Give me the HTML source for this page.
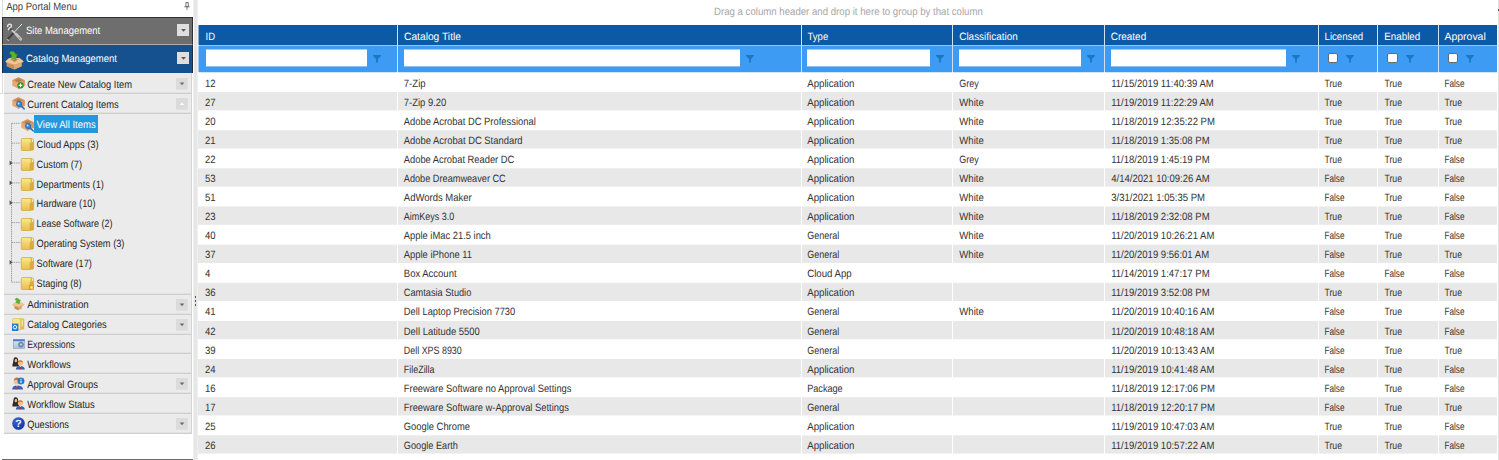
<!DOCTYPE html><html lang="en"><head><meta charset="utf-8"><title>App Portal - Current Catalog Items</title><style>
*{box-sizing:border-box;margin:0;padding:0}
html,body{width:1499px;height:460px;overflow:hidden;background:#fff}
body{position:relative;font-family:"Liberation Sans",sans-serif;font-size:10.6px;color:#3a3a3a;text-rendering:geometricPrecision}
.a{position:absolute;white-space:nowrap}
.t{position:absolute;white-space:nowrap;line-height:12px;height:12px;transform-origin:0 50%}
.hd{color:#fff;font-size:10.6px;transform-origin:0 50%}
.rt{color:#333;font-size:10px;transform-origin:0 50%}
.sm{color:#262626;font-size:10px;transform-origin:0 50%}
.bar{color:#fff;font-size:10px;transform-origin:0 50%}
svg{position:absolute;overflow:visible}
</style></head><body>
<aside id="app-portal-menu" aria-label="App Portal Menu">
<div class="a" style="left:2px;top:0;width:1px;height:94px;background:#dcdcdc"></div>
<div class="a" style="left:0;top:93px;width:3px;height:1px;background:#dcdcdc"></div>
<div class="t " style="left:6px;top:1px;font-size:10.6px;transform:translateX(0.25px) scaleX(0.8959);color:#404040">App Portal Menu</div>
<svg style="left:184px;top:2.4px" width="6" height="8" viewBox="0 0 6 8"><path d="M1.9 0.5h2.4v4h-2.4zM0.4 4.8h5.2M3 5v2.8" fill="none" stroke="#666" stroke-width="0.9"/></svg>
<div class="a" style="left:2px;top:17px;width:191px;height:28px;background:#6e6e6e;border:1px solid #303030;border-bottom:1px solid #b0aeac"></div>
<svg style="left:5.5px;top:23px" width="17" height="18" viewBox="0 0 17 18"><path d="M15.8 1.2L8.4 9" stroke="#e2e2e2" stroke-width="1" stroke-linecap="round"/><path d="M7.6 9.8L2.2 15.6" stroke="#3c3c3c" stroke-width="1.9" stroke-linecap="round"/><path d="M1.2 16.6L2.6 17.3" stroke="#d8d8d8" stroke-width="0.9" stroke-linecap="round"/><path d="M1.6 3.4C1.8 1.4 3.4 0.8 4.6 1.4C5.8 2 5.6 3.4 4.8 4.2C4.2 4.8 3.2 5.2 2.4 6.6" fill="none" stroke="#e4e4e4" stroke-width="1.5" stroke-linecap="round"/><circle cx="5" cy="6.4" r="1.2" fill="#484848"/><path d="M6.2 7.6L9.6 10.8" stroke="#cdcdcd" stroke-width="1.7" stroke-linecap="round"/><path d="M10.2 11.2L14.8 16.2" stroke="#c6c6c6" stroke-width="2.8" stroke-linecap="round"/><path d="M12.8 14.4L14.4 16" stroke="#909090" stroke-width="1" stroke-linecap="round"/></svg>
<div class="t bar" style="left:26px;top:25px;font-size:10.6px;transform:translateX(0.00px) scaleX(0.8941)">Site Management</div>
<div class="a" style="left:177px;top:24px;width:12px;height:12px;background:#dfdfdf"></div>
<svg style="left:180.6px;top:28.6px" width="5" height="3" viewBox="0 0 5 3"><path d="M0 0h5L2.5 2.8z" fill="#5a5a5a"/></svg>
<div class="a" style="left:2px;top:45px;width:191px;height:28px;background:#16518f;border-left:1px solid #1c2c40;border-right:1px solid #1c2c40"></div>
<svg style="left:5px;top:50.5px" width="19" height="18.5" viewBox="0 0 19 18.5"><path d="M0.3 10.4L4 7.2H14.8L18.7 10.4L16.6 12.2V15.2L9.3 18.4L1.8 15.2V12.2z" fill="#d9a66e"/><path d="M4 7.2H14.8L18.7 10.4L9.3 13.6L0.3 10.4z" fill="#efc797"/><path d="M1.8 12L9.3 14.6V18.4L1.8 15.2z" fill="#c8905a"/><path d="M9.3 14.6L16.6 12V15.2L9.3 18.4z" fill="#ddaa73"/><path d="M5.2 8.2H13.6L9.4 11z" fill="#b98250"/><path d="M5.4 0.6C7.5 -0.2 9.8 0.8 10.7 3.4L12.3 2.9L10.6 8.6L5.2 6.4L6.9 5.4C6.6 4.2 6 3.2 4.6 2.6z" fill="#58b52c" stroke="#3e8f1c" stroke-width="0.5"/></svg>
<div class="t bar" style="left:26px;top:53px;font-size:10.6px;transform:translateX(0.00px) scaleX(0.8970)">Catalog Management</div>
<div class="a" style="left:177px;top:52px;width:12px;height:12px;background:#dfdfdf"></div>
<svg style="left:180.6px;top:56.6px" width="5" height="3" viewBox="0 0 5 3"><path d="M0 0h5L2.5 2.8z" fill="#5a5a5a"/></svg>
<div class="a" style="left:4px;top:73px;width:187px;height:360px;background:#ebebeb"></div>
<div class="a" style="left:191px;top:73px;width:1px;height:361px;background:#d4d4d4"></div>
<div class="a" style="left:4px;top:92px;width:187px;height:1px;background:#e2e2e2"></div>
<div class="a" style="left:4px;top:93px;width:187px;height:1px;background:#cecece"></div>
<div class="a" style="left:4px;top:112px;width:187px;height:1px;background:#e2e2e2"></div>
<div class="a" style="left:4px;top:113px;width:187px;height:1px;background:#cecece"></div>
<div class="a" style="left:4px;top:293px;width:187px;height:1px;background:#e2e2e2"></div>
<div class="a" style="left:4px;top:294px;width:187px;height:1px;background:#cecece"></div>
<div class="a" style="left:4px;top:313px;width:187px;height:1px;background:#e2e2e2"></div>
<div class="a" style="left:4px;top:314px;width:187px;height:1px;background:#cecece"></div>
<div class="a" style="left:4px;top:333px;width:187px;height:1px;background:#e2e2e2"></div>
<div class="a" style="left:4px;top:334px;width:187px;height:1px;background:#cecece"></div>
<div class="a" style="left:4px;top:352px;width:187px;height:1px;background:#e2e2e2"></div>
<div class="a" style="left:4px;top:353px;width:187px;height:1px;background:#cecece"></div>
<div class="a" style="left:4px;top:372px;width:187px;height:1px;background:#e2e2e2"></div>
<div class="a" style="left:4px;top:373px;width:187px;height:1px;background:#cecece"></div>
<div class="a" style="left:4px;top:392px;width:187px;height:1px;background:#e2e2e2"></div>
<div class="a" style="left:4px;top:393px;width:187px;height:1px;background:#cecece"></div>
<div class="a" style="left:4px;top:412px;width:187px;height:1px;background:#e2e2e2"></div>
<div class="a" style="left:4px;top:413px;width:187px;height:1px;background:#cecece"></div>
<div class="a" style="left:4px;top:432px;width:187px;height:1px;background:#e2e2e2"></div>
<div class="a" style="left:4px;top:433px;width:187px;height:1px;background:#cecece"></div>
<svg style="left:0;top:0" width="0" height="0"><defs><linearGradient id="fg" x1="0" y1="0" x2="0" y2="1"><stop offset="0" stop-color="#f9e98a"/><stop offset="1" stop-color="#e9bd4e"/></linearGradient><linearGradient id="eg" x1="0" y1="0" x2="0" y2="1"><stop offset="0" stop-color="#e6eef6"/><stop offset="1" stop-color="#a9c0d8"/></linearGradient><radialGradient id="qg" cx="0.35" cy="0.3" r="0.8"><stop offset="0" stop-color="#3a68d0"/><stop offset="1" stop-color="#12309a"/></radialGradient></defs></svg>
<svg style="left:12px;top:77px" width="13" height="12" viewBox="0 0 13 12"><path d="M6.5 0.3L12.7 3.2V8.8L6.5 11.8L0.3 8.8V3.2z" fill="#e4a96f"/><path d="M6.5 0.3L12.7 3.2L6.5 6.1L0.3 3.2z" fill="#cd9460"/><path d="M6.5 6.1L12.7 3.2V8.8L6.5 11.8z" fill="#d3965c"/><path d="M6.5 2L10 3.4L6.5 5L3 3.4z" fill="#b57c48"/><path d="M6.5 6.1V11.8" stroke="#b8834e" stroke-width="0.5"/><circle cx="8.5" cy="8.4" r="2.9" fill="#2a9a2a" stroke="#1d7a1d" stroke-width="0.4"/><path d="M8.5 6.6V10.2M6.7 8.4H10.3" stroke="#fff" stroke-width="1.1"/></svg>
<div class="t sm" style="left:27px;top:79px;font-size:10.6px;transform:translateX(0.20px) scaleX(0.8808)">Create New Catalog Item</div>
<svg style="left:176.2px;top:77.8px" width="11.8" height="11.6" viewBox="0 0 11.8 11.6"><rect x="0" y="0" width="11.8" height="11.6" fill="#dbdbdb"/><path d="M3.7 4.6h4.6L6 7.2z" fill="#6a6a6a"/></svg>
<svg style="left:12px;top:97px" width="13" height="12" viewBox="0 0 13 12"><path d="M6.5 0.3L12.7 3.2V8.8L6.5 11.8L0.3 8.8V3.2z" fill="#e4a96f"/><path d="M6.5 0.3L12.7 3.2L6.5 6.1L0.3 3.2z" fill="#cd9460"/><path d="M6.5 6.1L12.7 3.2V8.8L6.5 11.8z" fill="#d3965c"/><path d="M6.5 2L10 3.4L6.5 5L3 3.4z" fill="#b57c48"/><path d="M6.5 6.1V11.8" stroke="#b8834e" stroke-width="0.5"/><path d="M8.2 8.2L12.2 11.8" stroke="#3c6fb8" stroke-width="1.6" stroke-linecap="round"/><circle cx="7.1" cy="7" r="2.6" fill="#2a8cf0" stroke="#2a62b0" stroke-width="0.8"/><circle cx="6.6" cy="6.5" r="0.9" fill="#bfe4ff"/></svg>
<div class="t sm" style="left:27px;top:99px;font-size:10.6px;transform:translateX(0.20px) scaleX(0.8831)">Current Catalog Items</div>
<svg style="left:176.2px;top:97.7px" width="11.8" height="11.6" viewBox="0 0 11.8 11.6"><rect x="0" y="0" width="11.8" height="11.6" fill="#dbdbdb"/><path d="M3.7 7.1h4.6L6 4.5z" fill="#fff"/></svg>
<svg style="left:12px;top:298px" width="12.5" height="12.5" viewBox="0 0 12.5 12.5"><path d="M0.2 6.8L2.8 4.8H9.8L12.4 6.8L9.8 8.4V10.4L6.3 12.3L2.6 10.4V8.4z" fill="#d9a66e"/><path d="M2.8 4.8H9.8L12.4 6.8L6.3 8.8L0.2 6.8z" fill="#efc797"/><path d="M2.6 8.2L6.3 9.6V12.3L2.6 10.4z" fill="#c8905a"/><path d="M3.8 0.4C5.2 -0.1 6.7 0.6 7.3 2.2L8.4 1.9L7.2 5.8L3.6 4.3L4.8 3.6C4.6 2.8 4.2 2.2 3.2 1.8z" fill="#58b52c" stroke="#3e8f1c" stroke-width="0.4"/></svg>
<div class="t sm" style="left:27px;top:299px;font-size:10.6px;transform:translateX(0.20px) scaleX(0.9166)">Administration</div>
<svg style="left:176.2px;top:298.6px" width="11.8" height="11.6" viewBox="0 0 11.8 11.6"><rect x="0" y="0" width="11.8" height="11.6" fill="#dbdbdb"/><path d="M3.7 4.6h4.6L6 7.2z" fill="#6a6a6a"/></svg>
<svg style="left:12px;top:317.8px" width="12.5" height="13" viewBox="0 0 12.5 13"><path d="M1.5 0.6H11.4Q12.3 0.6 12.3 1.5V10.6Q12.3 11.5 11.4 11.5H6V0.6z" fill="#e6b848"/><path d="M1.4 0.5H8.6V11.6H1.4Q0.5 11.6 0.5 10.7V1.4Q0.5 0.5 1.4 0.5z" fill="#f7e58a" stroke="#e0bb52" stroke-width="0.6"/><path d="M9.6 1.5H11V7L9.6 9.5z" fill="#f6e7a8"/><rect x="0" y="5.6" width="6.4" height="7.4" fill="#1f7fd0"/><circle cx="3" cy="9.2" r="1.7" fill="none" stroke="#fff" stroke-width="1"/></svg>
<div class="t sm" style="left:27px;top:319px;font-size:10.6px;transform:translateX(0.20px) scaleX(0.8767)">Catalog Categories</div>
<svg style="left:176.2px;top:318.5px" width="11.8" height="11.6" viewBox="0 0 11.8 11.6"><rect x="0" y="0" width="11.8" height="11.6" fill="#dbdbdb"/><path d="M3.7 4.6h4.6L6 7.2z" fill="#6a6a6a"/></svg>
<svg style="left:12.8px;top:339.3px" width="12" height="9.6" viewBox="0 0 12 9.6"><rect x="0.3" y="0.3" width="11.4" height="9" fill="url(#eg)" stroke="#7f9dc0" stroke-width="0.6"/><rect x="0.3" y="0.3" width="11.4" height="2" fill="#4d7fd0"/><circle cx="8" cy="5.6" r="2.6" fill="#7d93b5" stroke="#5d7396" stroke-width="0.6"/><circle cx="8" cy="5.6" r="1" fill="#c6d4e6"/></svg>
<div class="t sm" style="left:27px;top:339px;font-size:10.6px;transform:translateX(0.20px) scaleX(0.8282)">Expressions</div>
<svg style="left:12px;top:357.2px" width="13" height="12.6" viewBox="0 0 13 12.6"><path d="M3.4 0.2C5.4 0.2 6.4 1.8 6.2 4C6.1 5.6 7 6.6 7.6 7.4L6.6 9.4H0.4C0.2 7.6 1 6.6 1.2 5C1.4 2.6 1.6 0.2 3.4 0.2z" fill="#2e2a28"/><ellipse cx="3.9" cy="3.6" rx="1.3" ry="1.8" fill="#eab98a"/><path d="M3.8 12.6C3.8 10.2 5.6 9 8.4 9C11.2 9 12.8 10.2 12.8 12.6z" fill="#3860b8"/><path d="M7.6 9.2H9.2L8.4 10.2z" fill="#fff"/><path d="M8.1 10L8.7 10L8.9 12.4H7.9z" fill="#c03030"/><circle cx="8.4" cy="6.2" r="2.5" fill="#f0c090"/><path d="M5.9 5.8C5.8 3.8 7.2 3.2 8.6 3.3C10 3.4 11 4.4 10.9 5.8C10 4.8 8.8 4.6 7.4 4.8C6.6 4.9 6.2 5.2 5.9 5.8z" fill="#c8702a"/></svg>
<div class="t sm" style="left:27px;top:359px;font-size:10.6px;transform:translateX(0.20px) scaleX(0.8941)">Workflows</div>
<svg style="left:12px;top:377.3px" width="12.5" height="12.6" viewBox="0 0 12.5 12.6"><path d="M0.2 12.4C0.2 9.6 2 8.4 5 8.4C8 8.4 11 9.4 11 12.4z" fill="#3860b8"/><path d="M3.8 8.6H5.8L4.8 9.8z" fill="#fff"/><path d="M4.5 9.6L5.1 9.6L5.4 12.2H4.2z" fill="#c03030"/><circle cx="4.6" cy="4.6" r="2.9" fill="#f0c090"/><path d="M1.8 4.2C1.6 1.6 3.2 0.4 5 0.5C6.8 0.6 7.8 2 7.6 3.6C6.4 2.8 5.2 2.6 3.6 2.8C2.6 3 2.2 3.4 1.8 4.2z" fill="#c8702a"/><circle cx="9" cy="4" r="3.2" fill="#1f7fd6" stroke="#1860b0" stroke-width="0.5"/><rect x="8.5" y="3.4" width="1" height="2.8" fill="#fff"/><rect x="8.5" y="1.8" width="1" height="1" fill="#fff"/></svg>
<div class="t sm" style="left:27px;top:379px;font-size:10.6px;transform:translateX(0.20px) scaleX(0.8900)">Approval Groups</div>
<svg style="left:176.2px;top:377.9px" width="11.8" height="11.6" viewBox="0 0 11.8 11.6"><rect x="0" y="0" width="11.8" height="11.6" fill="#dbdbdb"/><path d="M3.7 4.6h4.6L6 7.2z" fill="#6a6a6a"/></svg>
<svg style="left:12px;top:397px" width="13" height="12.6" viewBox="0 0 13 12.6"><path d="M3.4 0.2C5.4 0.2 6.4 1.8 6.2 4C6.1 5.6 7 6.6 7.6 7.4L6.6 9.4H0.4C0.2 7.6 1 6.6 1.2 5C1.4 2.6 1.6 0.2 3.4 0.2z" fill="#2e2a28"/><ellipse cx="3.9" cy="3.6" rx="1.3" ry="1.8" fill="#eab98a"/><path d="M3.8 12.6C3.8 10.2 5.6 9 8.4 9C11.2 9 12.8 10.2 12.8 12.6z" fill="#3860b8"/><path d="M7.6 9.2H9.2L8.4 10.2z" fill="#fff"/><path d="M8.1 10L8.7 10L8.9 12.4H7.9z" fill="#c03030"/><circle cx="8.4" cy="6.2" r="2.5" fill="#f0c090"/><path d="M5.9 5.8C5.8 3.8 7.2 3.2 8.6 3.3C10 3.4 11 4.4 10.9 5.8C10 4.8 8.8 4.6 7.4 4.8C6.6 4.9 6.2 5.2 5.9 5.8z" fill="#c8702a"/></svg>
<div class="t sm" style="left:27px;top:399px;font-size:10.6px;transform:translateX(0.20px) scaleX(0.8851)">Workflow Status</div>
<svg style="left:12px;top:417px" width="13" height="13" viewBox="0 0 13 13"><circle cx="6.5" cy="6.5" r="6.3" fill="url(#qg)"/><text x="6.5" y="10.2" text-anchor="middle" font-family="Liberation Sans, sans-serif" font-weight="bold" font-size="10.5" fill="#f4f4f8">?</text></svg>
<div class="t sm" style="left:27px;top:419px;font-size:10.6px;transform:translateX(0.20px) scaleX(0.8753)">Questions</div>
<svg style="left:176.2px;top:417.6px" width="11.8" height="11.6" viewBox="0 0 11.8 11.6"><rect x="0" y="0" width="11.8" height="11.6" fill="#dbdbdb"/><path d="M3.7 4.6h4.6L6 7.2z" fill="#6a6a6a"/></svg>
<svg style="left:0;top:0" width="40" height="300" viewBox="0 0 40 300"><path d="M11.5 123.3V282.18" stroke="#9c9c9c" stroke-width="1" stroke-dasharray="1.4 0.8" fill="none"/><path d="M11.5 123.30H20.5" stroke="#9c9c9c" stroke-width="1" stroke-dasharray="1.4 0.8" fill="none"/><path d="M11.5 143.16H20.5" stroke="#9c9c9c" stroke-width="1" stroke-dasharray="1.4 0.8" fill="none"/><path d="M11.5 163.02H20.5" stroke="#9c9c9c" stroke-width="1" stroke-dasharray="1.4 0.8" fill="none"/><path d="M9.6 160.62L12.5 163.02L9.6 165.42z" fill="#505050"/><path d="M11.5 182.88H20.5" stroke="#9c9c9c" stroke-width="1" stroke-dasharray="1.4 0.8" fill="none"/><path d="M9.6 180.48L12.5 182.88L9.6 185.28z" fill="#505050"/><path d="M11.5 202.74H20.5" stroke="#9c9c9c" stroke-width="1" stroke-dasharray="1.4 0.8" fill="none"/><path d="M9.6 200.34L12.5 202.74L9.6 205.14z" fill="#505050"/><path d="M11.5 222.60H20.5" stroke="#9c9c9c" stroke-width="1" stroke-dasharray="1.4 0.8" fill="none"/><path d="M11.5 242.46H20.5" stroke="#9c9c9c" stroke-width="1" stroke-dasharray="1.4 0.8" fill="none"/><path d="M11.5 262.32H20.5" stroke="#9c9c9c" stroke-width="1" stroke-dasharray="1.4 0.8" fill="none"/><path d="M9.6 259.92L12.5 262.32L9.6 264.72z" fill="#505050"/><path d="M11.5 282.18H20.5" stroke="#9c9c9c" stroke-width="1" stroke-dasharray="1.4 0.8" fill="none"/></svg>
<div class="a" style="left:34px;top:115px;width:64px;height:18px;background:#2398dc"></div>
<div class="t sm" style="left:36px;top:119px;font-size:10.6px;transform:translateX(0.60px) scaleX(0.8993);color:#fff">View All Items</div>
<svg style="left:20.8px;top:118.6px" width="13" height="12" viewBox="0 0 13 12"><path d="M6.5 0.3L12.7 3.2V8.8L6.5 11.8L0.3 8.8V3.2z" fill="#e4a96f"/><path d="M6.5 0.3L12.7 3.2L6.5 6.1L0.3 3.2z" fill="#cd9460"/><path d="M6.5 6.1L12.7 3.2V8.8L6.5 11.8z" fill="#d3965c"/><path d="M6.5 2L10 3.4L6.5 5L3 3.4z" fill="#b57c48"/><path d="M6.5 6.1V11.8" stroke="#b8834e" stroke-width="0.5"/><path d="M8.2 8.2L12.2 11.8" stroke="#3c6fb8" stroke-width="1.6" stroke-linecap="round"/><circle cx="7.1" cy="7" r="2.6" fill="#2a8cf0" stroke="#2a62b0" stroke-width="0.8"/><circle cx="6.6" cy="6.5" r="0.9" fill="#bfe4ff"/></svg>
<div class="t sm" style="left:36px;top:139px;font-size:10.6px;transform:translateX(0.60px) scaleX(0.8864)">Cloud Apps (3)</div>
<svg style="left:20.5px;top:138.06px" width="13" height="13" viewBox="0 0 13 13"><path d="M8.5 0.8H11.2Q12.6 0.8 12.6 2.2V11Q12.6 12.2 11.4 12.2H8.5z" fill="#e0a93c" stroke="#c9992f" stroke-width="0.5"/><path d="M10.6 1.2H12.2V3.6L10.6 4.6z" fill="#f6ecc0"/><path d="M1.2 0.5H10.2V4.4L9.2 5.4V12.5H1.2Q0.3 12.5 0.3 11.6V1.4Q0.3 0.5 1.2 0.5z" fill="url(#fg)" stroke="#cfa43a" stroke-width="0.7"/></svg>
<div class="t sm" style="left:36px;top:159px;font-size:10.6px;transform:translateX(0.60px) scaleX(0.8661)">Custom (7)</div>
<svg style="left:20.5px;top:157.92px" width="13" height="13" viewBox="0 0 13 13"><path d="M8.5 0.8H11.2Q12.6 0.8 12.6 2.2V11Q12.6 12.2 11.4 12.2H8.5z" fill="#e0a93c" stroke="#c9992f" stroke-width="0.5"/><path d="M10.6 1.2H12.2V3.6L10.6 4.6z" fill="#f6ecc0"/><path d="M1.2 0.5H10.2V4.4L9.2 5.4V12.5H1.2Q0.3 12.5 0.3 11.6V1.4Q0.3 0.5 1.2 0.5z" fill="url(#fg)" stroke="#cfa43a" stroke-width="0.7"/></svg>
<div class="t sm" style="left:36px;top:179px;font-size:10.6px;transform:translateX(0.60px) scaleX(0.8801)">Departments (1)</div>
<svg style="left:20.5px;top:177.78px" width="13" height="13" viewBox="0 0 13 13"><path d="M8.5 0.8H11.2Q12.6 0.8 12.6 2.2V11Q12.6 12.2 11.4 12.2H8.5z" fill="#e0a93c" stroke="#c9992f" stroke-width="0.5"/><path d="M10.6 1.2H12.2V3.6L10.6 4.6z" fill="#f6ecc0"/><path d="M1.2 0.5H10.2V4.4L9.2 5.4V12.5H1.2Q0.3 12.5 0.3 11.6V1.4Q0.3 0.5 1.2 0.5z" fill="url(#fg)" stroke="#cfa43a" stroke-width="0.7"/></svg>
<div class="t sm" style="left:36px;top:198px;font-size:10.6px;transform:translateX(0.60px) scaleX(0.8696)">Hardware (10)</div>
<svg style="left:20.5px;top:197.64px" width="13" height="13" viewBox="0 0 13 13"><path d="M8.5 0.8H11.2Q12.6 0.8 12.6 2.2V11Q12.6 12.2 11.4 12.2H8.5z" fill="#e0a93c" stroke="#c9992f" stroke-width="0.5"/><path d="M10.6 1.2H12.2V3.6L10.6 4.6z" fill="#f6ecc0"/><path d="M1.2 0.5H10.2V4.4L9.2 5.4V12.5H1.2Q0.3 12.5 0.3 11.6V1.4Q0.3 0.5 1.2 0.5z" fill="url(#fg)" stroke="#cfa43a" stroke-width="0.7"/></svg>
<div class="t sm" style="left:36px;top:218px;font-size:10.6px;transform:translateX(0.60px) scaleX(0.8474)">Lease Software (2)</div>
<svg style="left:20.5px;top:217.5px" width="13" height="13" viewBox="0 0 13 13"><path d="M8.5 0.8H11.2Q12.6 0.8 12.6 2.2V11Q12.6 12.2 11.4 12.2H8.5z" fill="#e0a93c" stroke="#c9992f" stroke-width="0.5"/><path d="M10.6 1.2H12.2V3.6L10.6 4.6z" fill="#f6ecc0"/><path d="M1.2 0.5H10.2V4.4L9.2 5.4V12.5H1.2Q0.3 12.5 0.3 11.6V1.4Q0.3 0.5 1.2 0.5z" fill="url(#fg)" stroke="#cfa43a" stroke-width="0.7"/></svg>
<div class="t sm" style="left:36px;top:238px;font-size:10.6px;transform:translateX(0.60px) scaleX(0.8724)">Operating System (3)</div>
<svg style="left:20.5px;top:237.36px" width="13" height="13" viewBox="0 0 13 13"><path d="M8.5 0.8H11.2Q12.6 0.8 12.6 2.2V11Q12.6 12.2 11.4 12.2H8.5z" fill="#e0a93c" stroke="#c9992f" stroke-width="0.5"/><path d="M10.6 1.2H12.2V3.6L10.6 4.6z" fill="#f6ecc0"/><path d="M1.2 0.5H10.2V4.4L9.2 5.4V12.5H1.2Q0.3 12.5 0.3 11.6V1.4Q0.3 0.5 1.2 0.5z" fill="url(#fg)" stroke="#cfa43a" stroke-width="0.7"/></svg>
<div class="t sm" style="left:36px;top:258px;font-size:10.6px;transform:translateX(0.60px) scaleX(0.8703)">Software (17)</div>
<svg style="left:20.5px;top:257.22px" width="13" height="13" viewBox="0 0 13 13"><path d="M8.5 0.8H11.2Q12.6 0.8 12.6 2.2V11Q12.6 12.2 11.4 12.2H8.5z" fill="#e0a93c" stroke="#c9992f" stroke-width="0.5"/><path d="M10.6 1.2H12.2V3.6L10.6 4.6z" fill="#f6ecc0"/><path d="M1.2 0.5H10.2V4.4L9.2 5.4V12.5H1.2Q0.3 12.5 0.3 11.6V1.4Q0.3 0.5 1.2 0.5z" fill="url(#fg)" stroke="#cfa43a" stroke-width="0.7"/></svg>
<div class="t sm" style="left:36px;top:278px;font-size:10.6px;transform:translateX(0.60px) scaleX(0.8662)">Staging (8)</div>
<svg style="left:20.5px;top:277.08px" width="13" height="13" viewBox="0 0 13 13"><path d="M8.5 0.8H11.2Q12.6 0.8 12.6 2.2V11Q12.6 12.2 11.4 12.2H8.5z" fill="#e0a93c" stroke="#c9992f" stroke-width="0.5"/><path d="M10.6 1.2H12.2V3.6L10.6 4.6z" fill="#f6ecc0"/><path d="M1.2 0.5H10.2V4.4L9.2 5.4V12.5H1.2Q0.3 12.5 0.3 11.6V1.4Q0.3 0.5 1.2 0.5z" fill="url(#fg)" stroke="#cfa43a" stroke-width="0.7"/><rect x="8.6" y="8.4" width="4" height="4" fill="#f2b01e" stroke="#c98a10" stroke-width="0.5"/><rect x="9.6" y="9.4" width="2" height="2" fill="#fff4c0"/></svg>
<div class="a" style="left:2px;top:459px;width:191px;height:1px;background:#6a6a6a"></div>
<div class="a" style="left:193px;top:0;width:1px;height:17px;background:#f1f1f1"></div>
<div class="a" style="left:193px;top:73px;width:1px;height:386px;background:#f1f1f1"></div>
<div class="a" style="left:194px;top:0;width:3px;height:460px;background:#e6e6e6"></div>
<div class="a" style="left:197px;top:0;width:1px;height:460px;background:#f0f0f0"></div>
<div class="a" style="left:195px;top:296px;width:1px;height:2px;background:#555"></div>
<div class="a" style="left:195px;top:300px;width:1px;height:2px;background:#555"></div>
<div class="a" style="left:195px;top:304px;width:1px;height:2px;background:#555"></div>
</aside>
<main id="catalog-grid" role="grid" aria-label="Current Catalog Items">
<div class="t " style="left:714px;top:6px;font-size:10.6px;transform:translateX(0.00px) scaleX(0.9094);color:#a6a6a6">Drag a column header and drop it here to group by that column</div>
<div class="a" style="left:199px;top:25px;width:1298px;height:21px;background:#0c5aa6"></div>
<div class="a" style="left:199px;top:45px;width:1298px;height:1px;background:#9fc4e8"></div>
<div class="a" style="left:199px;top:46px;width:1298px;height:26px;background:#3d9bf4"></div>
<div class="a" style="left:199px;top:72px;width:1298px;height:1px;background:#cfe6fc"></div>
<div class="a" style="left:198px;top:25px;width:1px;height:20px;background:#85acd2"></div>
<div class="a" style="left:198px;top:46px;width:1px;height:26px;background:#9ecdf9"></div>
<div class="t hd" style="left:205px;top:31px;font-size:10.6px;transform:translateX(0.50px) scaleX(0.8962)">ID</div>
<div class="t hd" style="left:404px;top:31px;font-size:10.6px;transform:translateX(0.00px) scaleX(0.9672)">Catalog Title</div>
<div class="t hd" style="left:807px;top:31px;font-size:10.6px;transform:translateX(0.60px) scaleX(0.8956)">Type</div>
<div class="t hd" style="left:959px;top:31px;font-size:10.6px;transform:translateX(0.25px) scaleX(0.9370)">Classification</div>
<div class="t hd" style="left:1110px;top:31px;font-size:10.6px;transform:translateX(0.75px) scaleX(0.9407)">Created</div>
<div class="t hd" style="left:1324px;top:31px;font-size:10.6px;transform:translateX(0.50px) scaleX(0.9128)">Licensed</div>
<div class="t hd" style="left:1384px;top:31px;font-size:10.6px;transform:translateX(0.25px) scaleX(0.9254)">Enabled</div>
<div class="t hd" style="left:1444px;top:31px;font-size:10.6px;transform:translateX(0.50px) scaleX(0.9864)">Approval</div>
<div class="t rt" style="left:205px;top:78px;font-size:10.6px;transform:translateX(0.00px) scaleX(0.9000)">12</div>
<div class="t rt" style="left:403px;top:78px;font-size:10.6px;transform:translateX(0.80px) scaleX(0.9020)">7-Zip</div>
<div class="t rt" style="left:807px;top:78px;font-size:10.6px;transform:translateX(0.20px) scaleX(0.9125)">Application</div>
<div class="t rt" style="left:959px;top:78px;font-size:10.6px;transform:translateX(0.30px) scaleX(0.8497)">Grey</div>
<div class="t rt" style="left:1111px;top:78px;font-size:10.6px;transform:translateX(0.20px) scaleX(0.9000)">11/15/2019 11:40:39 AM</div>
<div class="t rt" style="left:1324px;top:78px;font-size:10.6px;transform:translateX(0.50px) scaleX(0.8173)">True</div>
<div class="t rt" style="left:1384px;top:78px;font-size:10.6px;transform:translateX(0.50px) scaleX(0.8173)">True</div>
<div class="t rt" style="left:1444px;top:78px;font-size:10.6px;transform:translateX(0.50px) scaleX(0.7717)">False</div>
<div class="a" style="left:198px;top:92px;width:1299px;height:18px;background:#e8e8e8"></div>
<div class="a" style="left:198px;top:110px;width:1299px;height:1px;background:#f6f6f6"></div>
<div class="t rt" style="left:205px;top:97px;font-size:10.6px;transform:translateX(0.00px) scaleX(0.9000)">27</div>
<div class="t rt" style="left:403px;top:97px;font-size:10.6px;transform:translateX(0.80px) scaleX(0.8900)">7-Zip 9.20</div>
<div class="t rt" style="left:807px;top:97px;font-size:10.6px;transform:translateX(0.20px) scaleX(0.9125)">Application</div>
<div class="t rt" style="left:959px;top:97px;font-size:10.6px;transform:translateX(0.30px) scaleX(0.9046)">White</div>
<div class="t rt" style="left:1111px;top:97px;font-size:10.6px;transform:translateX(0.20px) scaleX(0.9000)">11/19/2019 11:22:29 AM</div>
<div class="t rt" style="left:1324px;top:97px;font-size:10.6px;transform:translateX(0.50px) scaleX(0.8173)">True</div>
<div class="t rt" style="left:1384px;top:97px;font-size:10.6px;transform:translateX(0.50px) scaleX(0.8173)">True</div>
<div class="t rt" style="left:1444px;top:97px;font-size:10.6px;transform:translateX(0.50px) scaleX(0.8173)">True</div>
<div class="t rt" style="left:205px;top:116px;font-size:10.6px;transform:translateX(0.00px) scaleX(0.9000)">20</div>
<div class="t rt" style="left:403px;top:116px;font-size:10.6px;transform:translateX(0.80px) scaleX(0.8854)">Adobe Acrobat DC Professional</div>
<div class="t rt" style="left:807px;top:116px;font-size:10.6px;transform:translateX(0.20px) scaleX(0.9125)">Application</div>
<div class="t rt" style="left:959px;top:116px;font-size:10.6px;transform:translateX(0.30px) scaleX(0.9046)">White</div>
<div class="t rt" style="left:1111px;top:116px;font-size:10.6px;transform:translateX(0.20px) scaleX(0.9000)">11/18/2019 12:35:22 PM</div>
<div class="t rt" style="left:1324px;top:116px;font-size:10.6px;transform:translateX(0.50px) scaleX(0.8173)">True</div>
<div class="t rt" style="left:1384px;top:116px;font-size:10.6px;transform:translateX(0.50px) scaleX(0.8173)">True</div>
<div class="t rt" style="left:1444px;top:116px;font-size:10.6px;transform:translateX(0.50px) scaleX(0.8173)">True</div>
<div class="a" style="left:198px;top:131px;width:1299px;height:17px;background:#e8e8e8"></div>
<div class="a" style="left:198px;top:130px;width:1299px;height:1px;background:#ededed"></div>
<div class="a" style="left:198px;top:148px;width:1299px;height:1px;background:#f3f3f3"></div>
<div class="t rt" style="left:205px;top:135px;font-size:10.6px;transform:translateX(0.00px) scaleX(0.9000)">21</div>
<div class="t rt" style="left:403px;top:135px;font-size:10.6px;transform:translateX(0.80px) scaleX(0.8881)">Adobe Acrobat DC Standard</div>
<div class="t rt" style="left:807px;top:135px;font-size:10.6px;transform:translateX(0.20px) scaleX(0.9125)">Application</div>
<div class="t rt" style="left:959px;top:135px;font-size:10.6px;transform:translateX(0.30px) scaleX(0.9046)">White</div>
<div class="t rt" style="left:1111px;top:135px;font-size:10.6px;transform:translateX(0.20px) scaleX(0.9000)">11/18/2019 1:35:08 PM</div>
<div class="t rt" style="left:1324px;top:135px;font-size:10.6px;transform:translateX(0.50px) scaleX(0.8173)">True</div>
<div class="t rt" style="left:1384px;top:135px;font-size:10.6px;transform:translateX(0.50px) scaleX(0.8173)">True</div>
<div class="t rt" style="left:1444px;top:135px;font-size:10.6px;transform:translateX(0.50px) scaleX(0.8173)">True</div>
<div class="t rt" style="left:205px;top:154px;font-size:10.6px;transform:translateX(0.00px) scaleX(0.9000)">22</div>
<div class="t rt" style="left:403px;top:154px;font-size:10.6px;transform:translateX(0.80px) scaleX(0.8805)">Adobe Acrobat Reader DC</div>
<div class="t rt" style="left:807px;top:154px;font-size:10.6px;transform:translateX(0.20px) scaleX(0.9125)">Application</div>
<div class="t rt" style="left:959px;top:154px;font-size:10.6px;transform:translateX(0.30px) scaleX(0.8497)">Grey</div>
<div class="t rt" style="left:1111px;top:154px;font-size:10.6px;transform:translateX(0.20px) scaleX(0.9000)">11/18/2019 1:45:19 PM</div>
<div class="t rt" style="left:1324px;top:154px;font-size:10.6px;transform:translateX(0.50px) scaleX(0.8173)">True</div>
<div class="t rt" style="left:1384px;top:154px;font-size:10.6px;transform:translateX(0.50px) scaleX(0.8173)">True</div>
<div class="t rt" style="left:1444px;top:154px;font-size:10.6px;transform:translateX(0.50px) scaleX(0.7717)">False</div>
<div class="a" style="left:198px;top:169px;width:1299px;height:17px;background:#e8e8e8"></div>
<div class="a" style="left:198px;top:168px;width:1299px;height:1px;background:#f0f0f0"></div>
<div class="a" style="left:198px;top:186px;width:1299px;height:1px;background:#f0f0f0"></div>
<div class="t rt" style="left:205px;top:173px;font-size:10.6px;transform:translateX(0.00px) scaleX(0.9000)">53</div>
<div class="t rt" style="left:403px;top:173px;font-size:10.6px;transform:translateX(0.80px) scaleX(0.8657)">Adobe Dreamweaver CC</div>
<div class="t rt" style="left:807px;top:173px;font-size:10.6px;transform:translateX(0.20px) scaleX(0.9125)">Application</div>
<div class="t rt" style="left:959px;top:173px;font-size:10.6px;transform:translateX(0.30px) scaleX(0.9046)">White</div>
<div class="t rt" style="left:1111px;top:173px;font-size:10.6px;transform:translateX(0.20px) scaleX(0.9000)">4/14/2021 10:09:26 AM</div>
<div class="t rt" style="left:1324px;top:173px;font-size:10.6px;transform:translateX(0.50px) scaleX(0.7717)">False</div>
<div class="t rt" style="left:1384px;top:173px;font-size:10.6px;transform:translateX(0.50px) scaleX(0.8173)">True</div>
<div class="t rt" style="left:1444px;top:173px;font-size:10.6px;transform:translateX(0.50px) scaleX(0.7717)">False</div>
<div class="t rt" style="left:205px;top:192px;font-size:10.6px;transform:translateX(0.00px) scaleX(0.9000)">51</div>
<div class="t rt" style="left:403px;top:192px;font-size:10.6px;transform:translateX(0.80px) scaleX(0.8972)">AdWords Maker</div>
<div class="t rt" style="left:807px;top:192px;font-size:10.6px;transform:translateX(0.20px) scaleX(0.9125)">Application</div>
<div class="t rt" style="left:959px;top:192px;font-size:10.6px;transform:translateX(0.30px) scaleX(0.9046)">White</div>
<div class="t rt" style="left:1111px;top:192px;font-size:10.6px;transform:translateX(0.20px) scaleX(0.9000)">3/31/2021 1:05:35 PM</div>
<div class="t rt" style="left:1324px;top:192px;font-size:10.6px;transform:translateX(0.50px) scaleX(0.7717)">False</div>
<div class="t rt" style="left:1384px;top:192px;font-size:10.6px;transform:translateX(0.50px) scaleX(0.8173)">True</div>
<div class="t rt" style="left:1444px;top:192px;font-size:10.6px;transform:translateX(0.50px) scaleX(0.7717)">False</div>
<div class="a" style="left:198px;top:207px;width:1299px;height:17px;background:#e8e8e8"></div>
<div class="a" style="left:198px;top:206px;width:1299px;height:1px;background:#f3f3f3"></div>
<div class="a" style="left:198px;top:224px;width:1299px;height:1px;background:#ededed"></div>
<div class="t rt" style="left:205px;top:211px;font-size:10.6px;transform:translateX(0.00px) scaleX(0.9000)">23</div>
<div class="t rt" style="left:403px;top:211px;font-size:10.6px;transform:translateX(0.80px) scaleX(0.8485)">AimKeys 3.0</div>
<div class="t rt" style="left:807px;top:211px;font-size:10.6px;transform:translateX(0.20px) scaleX(0.9125)">Application</div>
<div class="t rt" style="left:959px;top:211px;font-size:10.6px;transform:translateX(0.30px) scaleX(0.9046)">White</div>
<div class="t rt" style="left:1111px;top:211px;font-size:10.6px;transform:translateX(0.20px) scaleX(0.9000)">11/18/2019 2:32:08 PM</div>
<div class="t rt" style="left:1324px;top:211px;font-size:10.6px;transform:translateX(0.50px) scaleX(0.8173)">True</div>
<div class="t rt" style="left:1384px;top:211px;font-size:10.6px;transform:translateX(0.50px) scaleX(0.8173)">True</div>
<div class="t rt" style="left:1444px;top:211px;font-size:10.6px;transform:translateX(0.50px) scaleX(0.7717)">False</div>
<div class="t rt" style="left:205px;top:230px;font-size:10.6px;transform:translateX(0.00px) scaleX(0.9000)">40</div>
<div class="t rt" style="left:403px;top:230px;font-size:10.6px;transform:translateX(0.80px) scaleX(0.8840)">Apple iMac 21.5 inch</div>
<div class="t rt" style="left:807px;top:230px;font-size:10.6px;transform:translateX(0.20px) scaleX(0.8506)">General</div>
<div class="t rt" style="left:959px;top:230px;font-size:10.6px;transform:translateX(0.30px) scaleX(0.9046)">White</div>
<div class="t rt" style="left:1111px;top:230px;font-size:10.6px;transform:translateX(0.20px) scaleX(0.9000)">11/20/2019 10:26:21 AM</div>
<div class="t rt" style="left:1324px;top:230px;font-size:10.6px;transform:translateX(0.50px) scaleX(0.7717)">False</div>
<div class="t rt" style="left:1384px;top:230px;font-size:10.6px;transform:translateX(0.50px) scaleX(0.8173)">True</div>
<div class="t rt" style="left:1444px;top:230px;font-size:10.6px;transform:translateX(0.50px) scaleX(0.7717)">False</div>
<div class="a" style="left:198px;top:245px;width:1299px;height:18px;background:#e8e8e8"></div>
<div class="a" style="left:198px;top:244px;width:1299px;height:1px;background:#f6f6f6"></div>
<div class="t rt" style="left:205px;top:249px;font-size:10.6px;transform:translateX(0.00px) scaleX(0.9000)">37</div>
<div class="t rt" style="left:403px;top:249px;font-size:10.6px;transform:translateX(0.80px) scaleX(0.8856)">Apple iPhone 11</div>
<div class="t rt" style="left:807px;top:249px;font-size:10.6px;transform:translateX(0.20px) scaleX(0.8506)">General</div>
<div class="t rt" style="left:959px;top:249px;font-size:10.6px;transform:translateX(0.30px) scaleX(0.9046)">White</div>
<div class="t rt" style="left:1111px;top:249px;font-size:10.6px;transform:translateX(0.20px) scaleX(0.9000)">11/20/2019 9:56:01 AM</div>
<div class="t rt" style="left:1324px;top:249px;font-size:10.6px;transform:translateX(0.50px) scaleX(0.7717)">False</div>
<div class="t rt" style="left:1384px;top:249px;font-size:10.6px;transform:translateX(0.50px) scaleX(0.8173)">True</div>
<div class="t rt" style="left:1444px;top:249px;font-size:10.6px;transform:translateX(0.50px) scaleX(0.8173)">True</div>
<div class="t rt" style="left:205px;top:268px;font-size:10.6px;transform:translateX(0.00px) scaleX(0.9000)">4</div>
<div class="t rt" style="left:403px;top:268px;font-size:10.6px;transform:translateX(0.80px) scaleX(0.8959)">Box Account</div>
<div class="t rt" style="left:807px;top:268px;font-size:10.6px;transform:translateX(0.20px) scaleX(0.9097)">Cloud App</div>
<div class="t rt" style="left:1111px;top:268px;font-size:10.6px;transform:translateX(0.20px) scaleX(0.9000)">11/14/2019 1:47:17 PM</div>
<div class="t rt" style="left:1324px;top:268px;font-size:10.6px;transform:translateX(0.50px) scaleX(0.7717)">False</div>
<div class="t rt" style="left:1384px;top:268px;font-size:10.6px;transform:translateX(0.50px) scaleX(0.7717)">False</div>
<div class="t rt" style="left:1444px;top:268px;font-size:10.6px;transform:translateX(0.50px) scaleX(0.7717)">False</div>
<div class="a" style="left:198px;top:283px;width:1299px;height:18px;background:#e8e8e8"></div>
<div class="a" style="left:198px;top:282px;width:1299px;height:1px;background:#fafafa"></div>
<div class="t rt" style="left:205px;top:287px;font-size:10.6px;transform:translateX(0.00px) scaleX(0.9000)">36</div>
<div class="t rt" style="left:403px;top:287px;font-size:10.6px;transform:translateX(0.80px) scaleX(0.8682)">Camtasia Studio</div>
<div class="t rt" style="left:807px;top:287px;font-size:10.6px;transform:translateX(0.20px) scaleX(0.9125)">Application</div>
<div class="t rt" style="left:1111px;top:287px;font-size:10.6px;transform:translateX(0.20px) scaleX(0.9000)">11/19/2019 3:52:08 PM</div>
<div class="t rt" style="left:1324px;top:287px;font-size:10.6px;transform:translateX(0.50px) scaleX(0.8173)">True</div>
<div class="t rt" style="left:1384px;top:287px;font-size:10.6px;transform:translateX(0.50px) scaleX(0.8173)">True</div>
<div class="t rt" style="left:1444px;top:287px;font-size:10.6px;transform:translateX(0.50px) scaleX(0.8173)">True</div>
<div class="t rt" style="left:205px;top:306px;font-size:10.6px;transform:translateX(0.00px) scaleX(0.9000)">41</div>
<div class="t rt" style="left:403px;top:306px;font-size:10.6px;transform:translateX(0.80px) scaleX(0.8799)">Dell Laptop Precision 7730</div>
<div class="t rt" style="left:807px;top:306px;font-size:10.6px;transform:translateX(0.20px) scaleX(0.8506)">General</div>
<div class="t rt" style="left:959px;top:306px;font-size:10.6px;transform:translateX(0.30px) scaleX(0.9046)">White</div>
<div class="t rt" style="left:1111px;top:306px;font-size:10.6px;transform:translateX(0.20px) scaleX(0.9000)">11/20/2019 10:40:16 AM</div>
<div class="t rt" style="left:1324px;top:306px;font-size:10.6px;transform:translateX(0.50px) scaleX(0.7717)">False</div>
<div class="t rt" style="left:1384px;top:306px;font-size:10.6px;transform:translateX(0.50px) scaleX(0.8173)">True</div>
<div class="t rt" style="left:1444px;top:306px;font-size:10.6px;transform:translateX(0.50px) scaleX(0.7717)">False</div>
<div class="a" style="left:198px;top:321px;width:1299px;height:18px;background:#e8e8e8"></div>
<div class="a" style="left:198px;top:339px;width:1299px;height:1px;background:#fafafa"></div>
<div class="t rt" style="left:205px;top:326px;font-size:10.6px;transform:translateX(0.00px) scaleX(0.9000)">42</div>
<div class="t rt" style="left:403px;top:326px;font-size:10.6px;transform:translateX(0.80px) scaleX(0.8896)">Dell Latitude 5500</div>
<div class="t rt" style="left:807px;top:326px;font-size:10.6px;transform:translateX(0.20px) scaleX(0.8506)">General</div>
<div class="t rt" style="left:1111px;top:326px;font-size:10.6px;transform:translateX(0.20px) scaleX(0.9000)">11/20/2019 10:48:18 AM</div>
<div class="t rt" style="left:1324px;top:326px;font-size:10.6px;transform:translateX(0.50px) scaleX(0.7717)">False</div>
<div class="t rt" style="left:1384px;top:326px;font-size:10.6px;transform:translateX(0.50px) scaleX(0.8173)">True</div>
<div class="t rt" style="left:1444px;top:326px;font-size:10.6px;transform:translateX(0.50px) scaleX(0.7717)">False</div>
<div class="t rt" style="left:205px;top:345px;font-size:10.6px;transform:translateX(0.00px) scaleX(0.9000)">39</div>
<div class="t rt" style="left:403px;top:345px;font-size:10.6px;transform:translateX(0.80px) scaleX(0.8412)">Dell XPS 8930</div>
<div class="t rt" style="left:807px;top:345px;font-size:10.6px;transform:translateX(0.20px) scaleX(0.8506)">General</div>
<div class="t rt" style="left:1111px;top:345px;font-size:10.6px;transform:translateX(0.20px) scaleX(0.9000)">11/20/2019 10:13:43 AM</div>
<div class="t rt" style="left:1324px;top:345px;font-size:10.6px;transform:translateX(0.50px) scaleX(0.7717)">False</div>
<div class="t rt" style="left:1384px;top:345px;font-size:10.6px;transform:translateX(0.50px) scaleX(0.8173)">True</div>
<div class="t rt" style="left:1444px;top:345px;font-size:10.6px;transform:translateX(0.50px) scaleX(0.8173)">True</div>
<div class="a" style="left:198px;top:359px;width:1299px;height:18px;background:#e8e8e8"></div>
<div class="a" style="left:198px;top:377px;width:1299px;height:1px;background:#f7f7f7"></div>
<div class="t rt" style="left:205px;top:364px;font-size:10.6px;transform:translateX(0.00px) scaleX(0.9000)">24</div>
<div class="t rt" style="left:403px;top:364px;font-size:10.6px;transform:translateX(0.80px) scaleX(0.8422)">FileZilla</div>
<div class="t rt" style="left:807px;top:364px;font-size:10.6px;transform:translateX(0.20px) scaleX(0.9125)">Application</div>
<div class="t rt" style="left:1111px;top:364px;font-size:10.6px;transform:translateX(0.20px) scaleX(0.9000)">11/19/2019 10:41:48 AM</div>
<div class="t rt" style="left:1324px;top:364px;font-size:10.6px;transform:translateX(0.50px) scaleX(0.7717)">False</div>
<div class="t rt" style="left:1384px;top:364px;font-size:10.6px;transform:translateX(0.50px) scaleX(0.8173)">True</div>
<div class="t rt" style="left:1444px;top:364px;font-size:10.6px;transform:translateX(0.50px) scaleX(0.7717)">False</div>
<div class="t rt" style="left:205px;top:383px;font-size:10.6px;transform:translateX(0.00px) scaleX(0.9000)">16</div>
<div class="t rt" style="left:403px;top:383px;font-size:10.6px;transform:translateX(0.80px) scaleX(0.8844)">Freeware Software no Approval Settings</div>
<div class="t rt" style="left:807px;top:383px;font-size:10.6px;transform:translateX(0.20px) scaleX(0.8609)">Package</div>
<div class="t rt" style="left:1111px;top:383px;font-size:10.6px;transform:translateX(0.20px) scaleX(0.9000)">11/18/2019 12:17:06 PM</div>
<div class="t rt" style="left:1324px;top:383px;font-size:10.6px;transform:translateX(0.50px) scaleX(0.7717)">False</div>
<div class="t rt" style="left:1384px;top:383px;font-size:10.6px;transform:translateX(0.50px) scaleX(0.8173)">True</div>
<div class="t rt" style="left:1444px;top:383px;font-size:10.6px;transform:translateX(0.50px) scaleX(0.7717)">False</div>
<div class="a" style="left:198px;top:398px;width:1299px;height:17px;background:#e8e8e8"></div>
<div class="a" style="left:198px;top:397px;width:1299px;height:1px;background:#ececec"></div>
<div class="a" style="left:198px;top:415px;width:1299px;height:1px;background:#f4f4f4"></div>
<div class="t rt" style="left:205px;top:402px;font-size:10.6px;transform:translateX(0.00px) scaleX(0.9000)">17</div>
<div class="t rt" style="left:403px;top:402px;font-size:10.6px;transform:translateX(0.80px) scaleX(0.8845)">Freeware Software w-Approval Settings</div>
<div class="t rt" style="left:807px;top:402px;font-size:10.6px;transform:translateX(0.20px) scaleX(0.8506)">General</div>
<div class="t rt" style="left:1111px;top:402px;font-size:10.6px;transform:translateX(0.20px) scaleX(0.9000)">11/18/2019 12:20:17 PM</div>
<div class="t rt" style="left:1324px;top:402px;font-size:10.6px;transform:translateX(0.50px) scaleX(0.7717)">False</div>
<div class="t rt" style="left:1384px;top:402px;font-size:10.6px;transform:translateX(0.50px) scaleX(0.8173)">True</div>
<div class="t rt" style="left:1444px;top:402px;font-size:10.6px;transform:translateX(0.50px) scaleX(0.8173)">True</div>
<div class="t rt" style="left:205px;top:421px;font-size:10.6px;transform:translateX(0.00px) scaleX(0.9000)">25</div>
<div class="t rt" style="left:403px;top:421px;font-size:10.6px;transform:translateX(0.80px) scaleX(0.8846)">Google Chrome</div>
<div class="t rt" style="left:807px;top:421px;font-size:10.6px;transform:translateX(0.20px) scaleX(0.9125)">Application</div>
<div class="t rt" style="left:1111px;top:421px;font-size:10.6px;transform:translateX(0.20px) scaleX(0.9000)">11/19/2019 10:47:03 AM</div>
<div class="t rt" style="left:1324px;top:421px;font-size:10.6px;transform:translateX(0.50px) scaleX(0.8173)">True</div>
<div class="t rt" style="left:1384px;top:421px;font-size:10.6px;transform:translateX(0.50px) scaleX(0.8173)">True</div>
<div class="t rt" style="left:1444px;top:421px;font-size:10.6px;transform:translateX(0.50px) scaleX(0.7717)">False</div>
<div class="a" style="left:198px;top:436px;width:1299px;height:17px;background:#e8e8e8"></div>
<div class="a" style="left:198px;top:435px;width:1299px;height:1px;background:#f0f0f0"></div>
<div class="a" style="left:198px;top:453px;width:1299px;height:1px;background:#f1f1f1"></div>
<div class="t rt" style="left:205px;top:440px;font-size:10.6px;transform:translateX(0.00px) scaleX(0.9000)">26</div>
<div class="t rt" style="left:403px;top:440px;font-size:10.6px;transform:translateX(0.80px) scaleX(0.8674)">Google Earth</div>
<div class="t rt" style="left:807px;top:440px;font-size:10.6px;transform:translateX(0.20px) scaleX(0.9125)">Application</div>
<div class="t rt" style="left:1111px;top:440px;font-size:10.6px;transform:translateX(0.20px) scaleX(0.9000)">11/19/2019 10:57:22 AM</div>
<div class="t rt" style="left:1324px;top:440px;font-size:10.6px;transform:translateX(0.50px) scaleX(0.8173)">True</div>
<div class="t rt" style="left:1384px;top:440px;font-size:10.6px;transform:translateX(0.50px) scaleX(0.8173)">True</div>
<div class="t rt" style="left:1444px;top:440px;font-size:10.6px;transform:translateX(0.50px) scaleX(0.7717)">False</div>
<div class="a" style="left:397px;top:25px;width:1px;height:47px;background:#cfe2f5"></div>
<div class="a" style="left:397px;top:72px;width:1px;height:382px;background:#fff"></div>
<div class="a" style="left:801px;top:25px;width:1px;height:47px;background:#cfe2f5"></div>
<div class="a" style="left:801px;top:72px;width:1px;height:382px;background:#fff"></div>
<div class="a" style="left:952px;top:25px;width:1px;height:47px;background:#cfe2f5"></div>
<div class="a" style="left:952px;top:72px;width:1px;height:382px;background:#fff"></div>
<div class="a" style="left:1104px;top:25px;width:1px;height:47px;background:#cfe2f5"></div>
<div class="a" style="left:1104px;top:72px;width:1px;height:382px;background:#fff"></div>
<div class="a" style="left:1318px;top:25px;width:1px;height:47px;background:#cfe2f5"></div>
<div class="a" style="left:1318px;top:72px;width:1px;height:382px;background:#fff"></div>
<div class="a" style="left:1377px;top:25px;width:1px;height:47px;background:#cfe2f5"></div>
<div class="a" style="left:1377px;top:72px;width:1px;height:382px;background:#fff"></div>
<div class="a" style="left:1438px;top:25px;width:1px;height:47px;background:#cfe2f5"></div>
<div class="a" style="left:1438px;top:72px;width:1px;height:382px;background:#fff"></div>
<div class="a" style="left:1498px;top:0;width:1px;height:460px;background:#e0e0e0"></div>
<div class="a" style="left:1498px;top:9px;width:1px;height:2px;background:#555"></div>
<div class="a" style="left:206px;top:50px;width:161px;height:16px;background:#fff"></div>
<div class="a" style="left:206px;top:49px;width:161px;height:1px;background:#a4cffa"></div>
<div class="a" style="left:206px;top:66px;width:161px;height:1px;background:#8cc3f8"></div>
<div class="a" style="left:404px;top:50px;width:336px;height:16px;background:#fff"></div>
<div class="a" style="left:404px;top:49px;width:336px;height:1px;background:#a4cffa"></div>
<div class="a" style="left:404px;top:66px;width:336px;height:1px;background:#8cc3f8"></div>
<div class="a" style="left:807px;top:50px;width:123px;height:16px;background:#fff"></div>
<div class="a" style="left:807px;top:49px;width:123px;height:1px;background:#a4cffa"></div>
<div class="a" style="left:807px;top:66px;width:123px;height:1px;background:#8cc3f8"></div>
<div class="a" style="left:959px;top:50px;width:122px;height:16px;background:#fff"></div>
<div class="a" style="left:959px;top:49px;width:122px;height:1px;background:#a4cffa"></div>
<div class="a" style="left:959px;top:66px;width:122px;height:1px;background:#8cc3f8"></div>
<div class="a" style="left:1111px;top:50px;width:175px;height:16px;background:#fff"></div>
<div class="a" style="left:1111px;top:49px;width:175px;height:1px;background:#a4cffa"></div>
<div class="a" style="left:1111px;top:66px;width:175px;height:1px;background:#8cc3f8"></div>
<svg style="left:373.2px;top:54.8px" width="8" height="7.6" viewBox="0 0 8 7.6"><path d="M0 0h8v1.1L4.9 4V7.6H3.1V4L0 1.1z" fill="#1779c4"/></svg>
<svg style="left:745.7px;top:54.8px" width="8" height="7.6" viewBox="0 0 8 7.6"><path d="M0 0h8v1.1L4.9 4V7.6H3.1V4L0 1.1z" fill="#1779c4"/></svg>
<svg style="left:935.7px;top:54.8px" width="8" height="7.6" viewBox="0 0 8 7.6"><path d="M0 0h8v1.1L4.9 4V7.6H3.1V4L0 1.1z" fill="#1779c4"/></svg>
<svg style="left:1087.2px;top:54.8px" width="8" height="7.6" viewBox="0 0 8 7.6"><path d="M0 0h8v1.1L4.9 4V7.6H3.1V4L0 1.1z" fill="#1779c4"/></svg>
<svg style="left:1291.7px;top:54.8px" width="8" height="7.6" viewBox="0 0 8 7.6"><path d="M0 0h8v1.1L4.9 4V7.6H3.1V4L0 1.1z" fill="#1779c4"/></svg>
<svg style="left:1346.2px;top:54.8px" width="8" height="7.6" viewBox="0 0 8 7.6"><path d="M0 0h8v1.1L4.9 4V7.6H3.1V4L0 1.1z" fill="#1779c4"/></svg>
<svg style="left:1405.7px;top:54.8px" width="8" height="7.6" viewBox="0 0 8 7.6"><path d="M0 0h8v1.1L4.9 4V7.6H3.1V4L0 1.1z" fill="#1779c4"/></svg>
<svg style="left:1466.2px;top:54.8px" width="8" height="7.6" viewBox="0 0 8 7.6"><path d="M0 0h8v1.1L4.9 4V7.6H3.1V4L0 1.1z" fill="#1779c4"/></svg>
<div class="a" style="left:1327.5px;top:52.5px;width:10.5px;height:10.5px;background:#fff;border:1px solid #6a6a6a;border-radius:2px"></div>
<div class="a" style="left:1387.0px;top:52.5px;width:10.5px;height:10.5px;background:#fff;border:1px solid #6a6a6a;border-radius:2px"></div>
<div class="a" style="left:1447.5px;top:52.5px;width:10.5px;height:10.5px;background:#fff;border:1px solid #6a6a6a;border-radius:2px"></div>
</main>
</body></html>
